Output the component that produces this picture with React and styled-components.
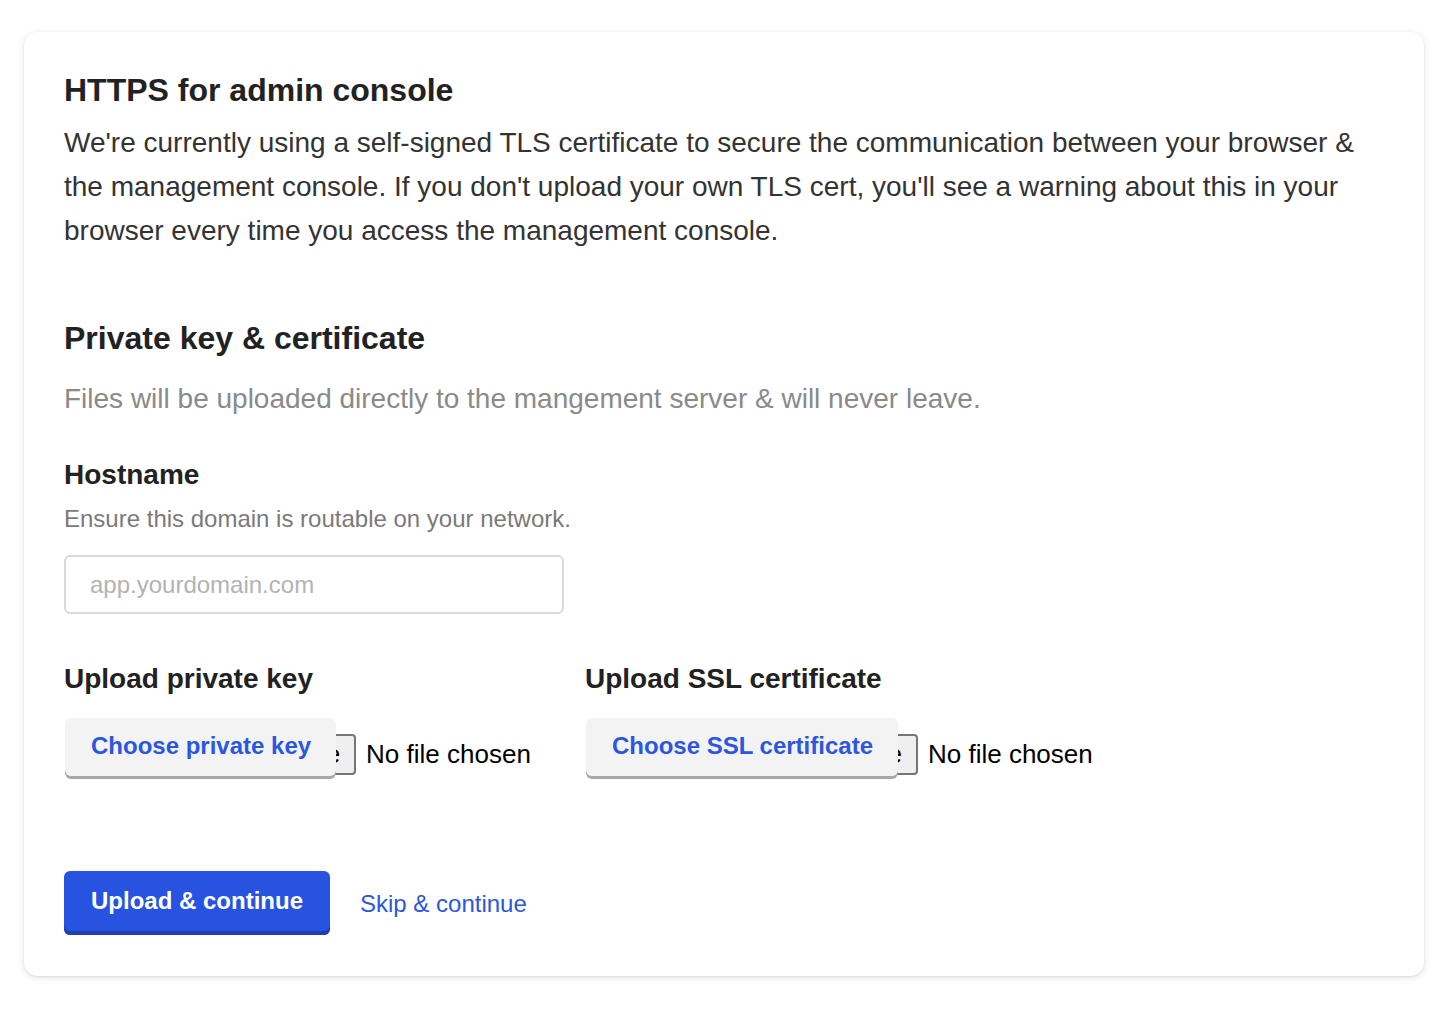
import React from "react";
import styled, { createGlobalStyle } from "styled-components";

const GlobalStyle = createGlobalStyle`
  html, body {
    margin: 0;
    padding: 0;
    background: #ffffff;
    font-family: "Liberation Sans", Arial, Helvetica, sans-serif;
  }
  * {
    box-sizing: border-box;
  }
`;

const App = () => {
  return (
    <Page>
      <GlobalStyle />
      <Card>
        <Title>HTTPS for admin console</Title>
        <Intro>
          We're currently using a self-signed TLS certificate to secure the
          communication between your browser &amp; the management console. If
          you don't upload your own TLS cert, you'll see a warning about this in
          your browser every time you access the management console.
        </Intro>

        <SectionTitle>Private key &amp; certificate</SectionTitle>
        <Muted>
          Files will be uploaded directly to the mangement server &amp; will
          never leave.
        </Muted>

        <FieldLabel>Hostname</FieldLabel>
        <Hint>Ensure this domain is routable on your network.</Hint>
        <TextInput type="text" placeholder="app.yourdomain.com" />

        <UploadGrid>
          <div>
            <UploadLabel>Upload private key</UploadLabel>
            <FileRow>
              <ChooseButton>Choose private key</ChooseButton>
              <NativeButton>Choose file</NativeButton>
              <NoFile>No file chosen</NoFile>
            </FileRow>
          </div>
          <div>
            <UploadLabel>Upload SSL certificate</UploadLabel>
            <FileRow>
              <ChooseButton>Choose SSL certificate</ChooseButton>
              <NativeButton>Choose file</NativeButton>
              <NoFile>No file chosen</NoFile>
            </FileRow>
          </div>
        </UploadGrid>

        <Actions>
          <PrimaryButton>Upload &amp; continue</PrimaryButton>
          <LinkButton>Skip &amp; continue</LinkButton>
        </Actions>
      </Card>
    </Page>
  );
};
export default App;

const Page = styled.div`
  padding: 32px 24px;
`;

const Card = styled.div`
  width: 1400px;
  background: #ffffff;
  border-radius: 14px;
  box-shadow: 0 1px 3px rgba(0, 0, 0, 0.1), 0 2px 10px rgba(0, 0, 0, 0.08);
  padding: 40px 40px 41px;
  color: #222222;
`;

const Title = styled.h1`
  margin: 0;
  font-size: 32px;
  line-height: 36px;
  font-weight: 700;
  color: #222222;
`;

const Intro = styled.p`
  margin: 13px 0 0;
  font-size: 28px;
  line-height: 44px;
  color: #333333;
`;

const SectionTitle = styled.h2`
  margin: 67px 0 0;
  font-size: 32px;
  line-height: 36px;
  font-weight: 700;
  color: #222222;
`;

const Muted = styled.p`
  margin: 21px 0 0;
  font-size: 28px;
  line-height: 44px;
  color: #8a8a8a;
`;

const FieldLabel = styled.h3`
  margin: 38px 0 0;
  font-size: 28px;
  line-height: 32px;
  font-weight: 700;
  color: #222222;
`;

const Hint = styled.p`
  margin: 12px 0 0;
  font-size: 24px;
  line-height: 32px;
  color: #7a7a7a;
`;

const TextInput = styled.input`
  display: block;
  margin-top: 20px;
  width: 500px;
  height: 59px;
  border: 2px solid #dadada;
  border-radius: 6px;
  padding: 0 24px;
  font-family: inherit;
  font-size: 24px;
  color: #333333;
  outline: none;
  &::placeholder {
    color: #b3b3b3;
  }
`;

const UploadGrid = styled.div`
  display: grid;
  grid-template-columns: 521px auto;
  margin-top: 49px;
`;

const UploadLabel = styled.h3`
  margin: 0 0 23px;
  font-size: 28px;
  line-height: 32px;
  font-weight: 700;
  color: #222222;
`;

const FileRow = styled.div`
  display: flex;
  align-items: flex-start;
`;

const ChooseButton = styled.label`
  position: relative;
  z-index: 1;
  display: flex;
  align-items: center;
  height: 58px;
  padding: 0 25px 2px 26px;
  margin-left: 1px;
  background: #f3f3f3;
  border-radius: 6px;
  box-shadow: 0 3px 0 #a8a8a8;
  color: #2a56e0;
  font-size: 24px;
  font-weight: 700;
  white-space: nowrap;
  cursor: pointer;
`;

const NativeButton = styled.span`
  display: flex;
  align-items: center;
  justify-content: flex-end;
  width: 140px;
  height: 41px;
  margin-top: 16px;
  margin-left: -120px;
  padding: 0 14px;
  background: #efefef;
  border: 2px solid #767676;
  border-radius: 4px;
  font-size: 26px;
  color: #000000;
  white-space: nowrap;
`;

const NoFile = styled.span`
  margin-top: 16px;
  margin-left: 10px;
  line-height: 41px;
  font-size: 26px;
  color: #000000;
  white-space: nowrap;
`;

const Actions = styled.div`
  display: flex;
  align-items: center;
  gap: 30px;
  margin-top: 95px;
`;

const PrimaryButton = styled.button`
  height: 64px;
  padding: 0 27px 4px;
  background: #2753e0;
  border: none;
  border-radius: 6px;
  box-shadow: inset 0 -4px 0 #1f40ae;
  color: #ffffff;
  font-family: inherit;
  font-size: 24px;
  font-weight: 700;
  cursor: pointer;
`;

const LinkButton = styled.button`
  background: none;
  border: none;
  padding: 0;
  margin-top: 2px;
  color: #2a56e0;
  font-family: inherit;
  font-size: 24px;
  cursor: pointer;
`;
